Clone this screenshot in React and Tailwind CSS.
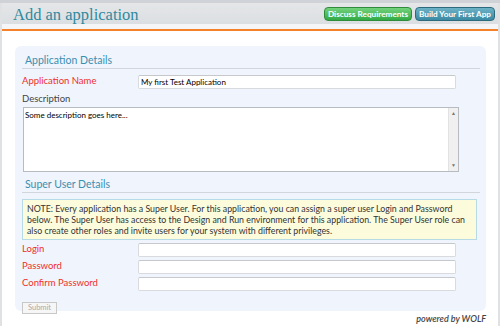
import React from 'react';

const FONT = { fontFamily: 'Lato, "Open Sans", sans-serif' };

function Field({ label, value = '' }) {
  return (
    <div className="flex items-center h-[17px]">
      <label className="w-[116px] text-[9.5px] text-[#ee2f2a]">{label}</label>
      <input
        defaultValue={value}
        className="w-[318px] h-[14px] bg-white border border-[#d8dadd] border-t-[#c6c8cc] rounded-[2px] px-[2px] text-[8px] text-black outline-none"
      />
    </div>
  );
}

function Section({ children }) {
  return (
    <>
      <div className="text-[10.5px] text-[#3a8fb0] pl-[3px] leading-[14px]">{children}</div>
      <div className="h-px bg-[#d2d6dc] mt-[1px]" />
    </>
  );
}

export default function App() {
  return (
    <div className="w-[500px] h-[326px] bg-white overflow-hidden text-[#333]" style={FONT}>
      <div className="h-[3px] bg-[#cfd2d6]" />
      <div className="border-l-2 border-r-2 border-[#e0e1e3] h-[323px] flex flex-col">
        {/* header */}
        <div className="h-[21px] bg-gradient-to-b from-[#e4e6e8] to-[#dcdfe2] flex items-start justify-between pl-[11px] pr-[3px]">
          <h1 className="text-[16.5px] leading-[22px] text-[#2f8aa0] mt-[1px]" style={{ fontFamily: '"Liberation Serif", serif' }}>
            Add an application
          </h1>
          <div className="flex gap-[3px] mt-[4px]">
            <button className="h-[14px] px-[3px] rounded-[4px] border border-[#2e8c3a] bg-gradient-to-b from-[#72d27c] to-[#2faa44] text-white text-[8.2px] font-bold leading-[12px]">
              Discuss Requirements
            </button>
            <button className="h-[14px] px-[3px] rounded-[4px] border border-[#2c6a7e] bg-gradient-to-b from-[#6cb2c6] to-[#3a8aa3] text-white text-[8.2px] font-bold leading-[12px]">
              Build Your First App
            </button>
          </div>
        </div>
        <div className="h-[5px] bg-[#f4f5f7]" />
        <div className="h-[2px] bg-[#f5822a]" />

        <div className="flex-1 pl-[13px] pt-[15px] flex flex-col">
          <div className="w-[471px] h-[265px] bg-[#f0f4fd] rounded-[6px] pl-[7px] pr-[6px] pt-[7px]">
            <Section>Application Details</Section>
            <div className="mt-[4px]">
              <Field label="Application Name" value="My first Test Application" />
            </div>
            <div className="text-[9.5px] text-[#444] mt-[3px] leading-[12px]">Description</div>
            <div className="mt-[2px] ml-[1px] w-[436px] h-[65px] bg-white border border-[#b8bbc0] flex">
              <div className="flex-1 text-[8px] text-black px-[1px] pt-[1px]">Some description goes here...</div>
              <div className="w-[10px] bg-[#f0f0f0] border-l border-[#e2e2e2] flex flex-col justify-between items-center py-[2px] text-[5px] text-[#777]">
                <span>▲</span>
                <span>▼</span>
              </div>
            </div>
            <div className="mt-[5px]">
              <Section>Super User Details</Section>
            </div>
            <div className="mt-[6px] w-[455px] bg-[#fcfcdd] border border-[#b6dbe6] px-[4px] py-[3px] text-[8.8px] leading-[11px] text-[#333]">
              <div className="whitespace-nowrap">NOTE: Every application has a Super User. For this application, you can assign a super user Login and Password</div>
              <div className="whitespace-nowrap">below. The Super User has access to the Design and Run environment for this application. The Super User role can</div>
              <div className="whitespace-nowrap">also create other roles and invite users for your system with different privileges.</div>
            </div>
            <div className="mt-[1px]">
              <Field label="Login" />
            </div>
            <Field label="Password" />
            <Field label="Confirm Password" />
            <button className="mt-[3px] h-[12px] w-[35px] border border-[#c8c8c8] bg-[#f6f6f6] text-[7.5px] text-[#aaa] leading-[10px]">
              Submit
            </button>
          </div>
          <div className="w-[471px] text-right text-[9px] italic font-semibold text-[#444] mt-[2px] leading-[12px]">powered by WOLF</div>
        </div>
      </div>
    </div>
  );
}
